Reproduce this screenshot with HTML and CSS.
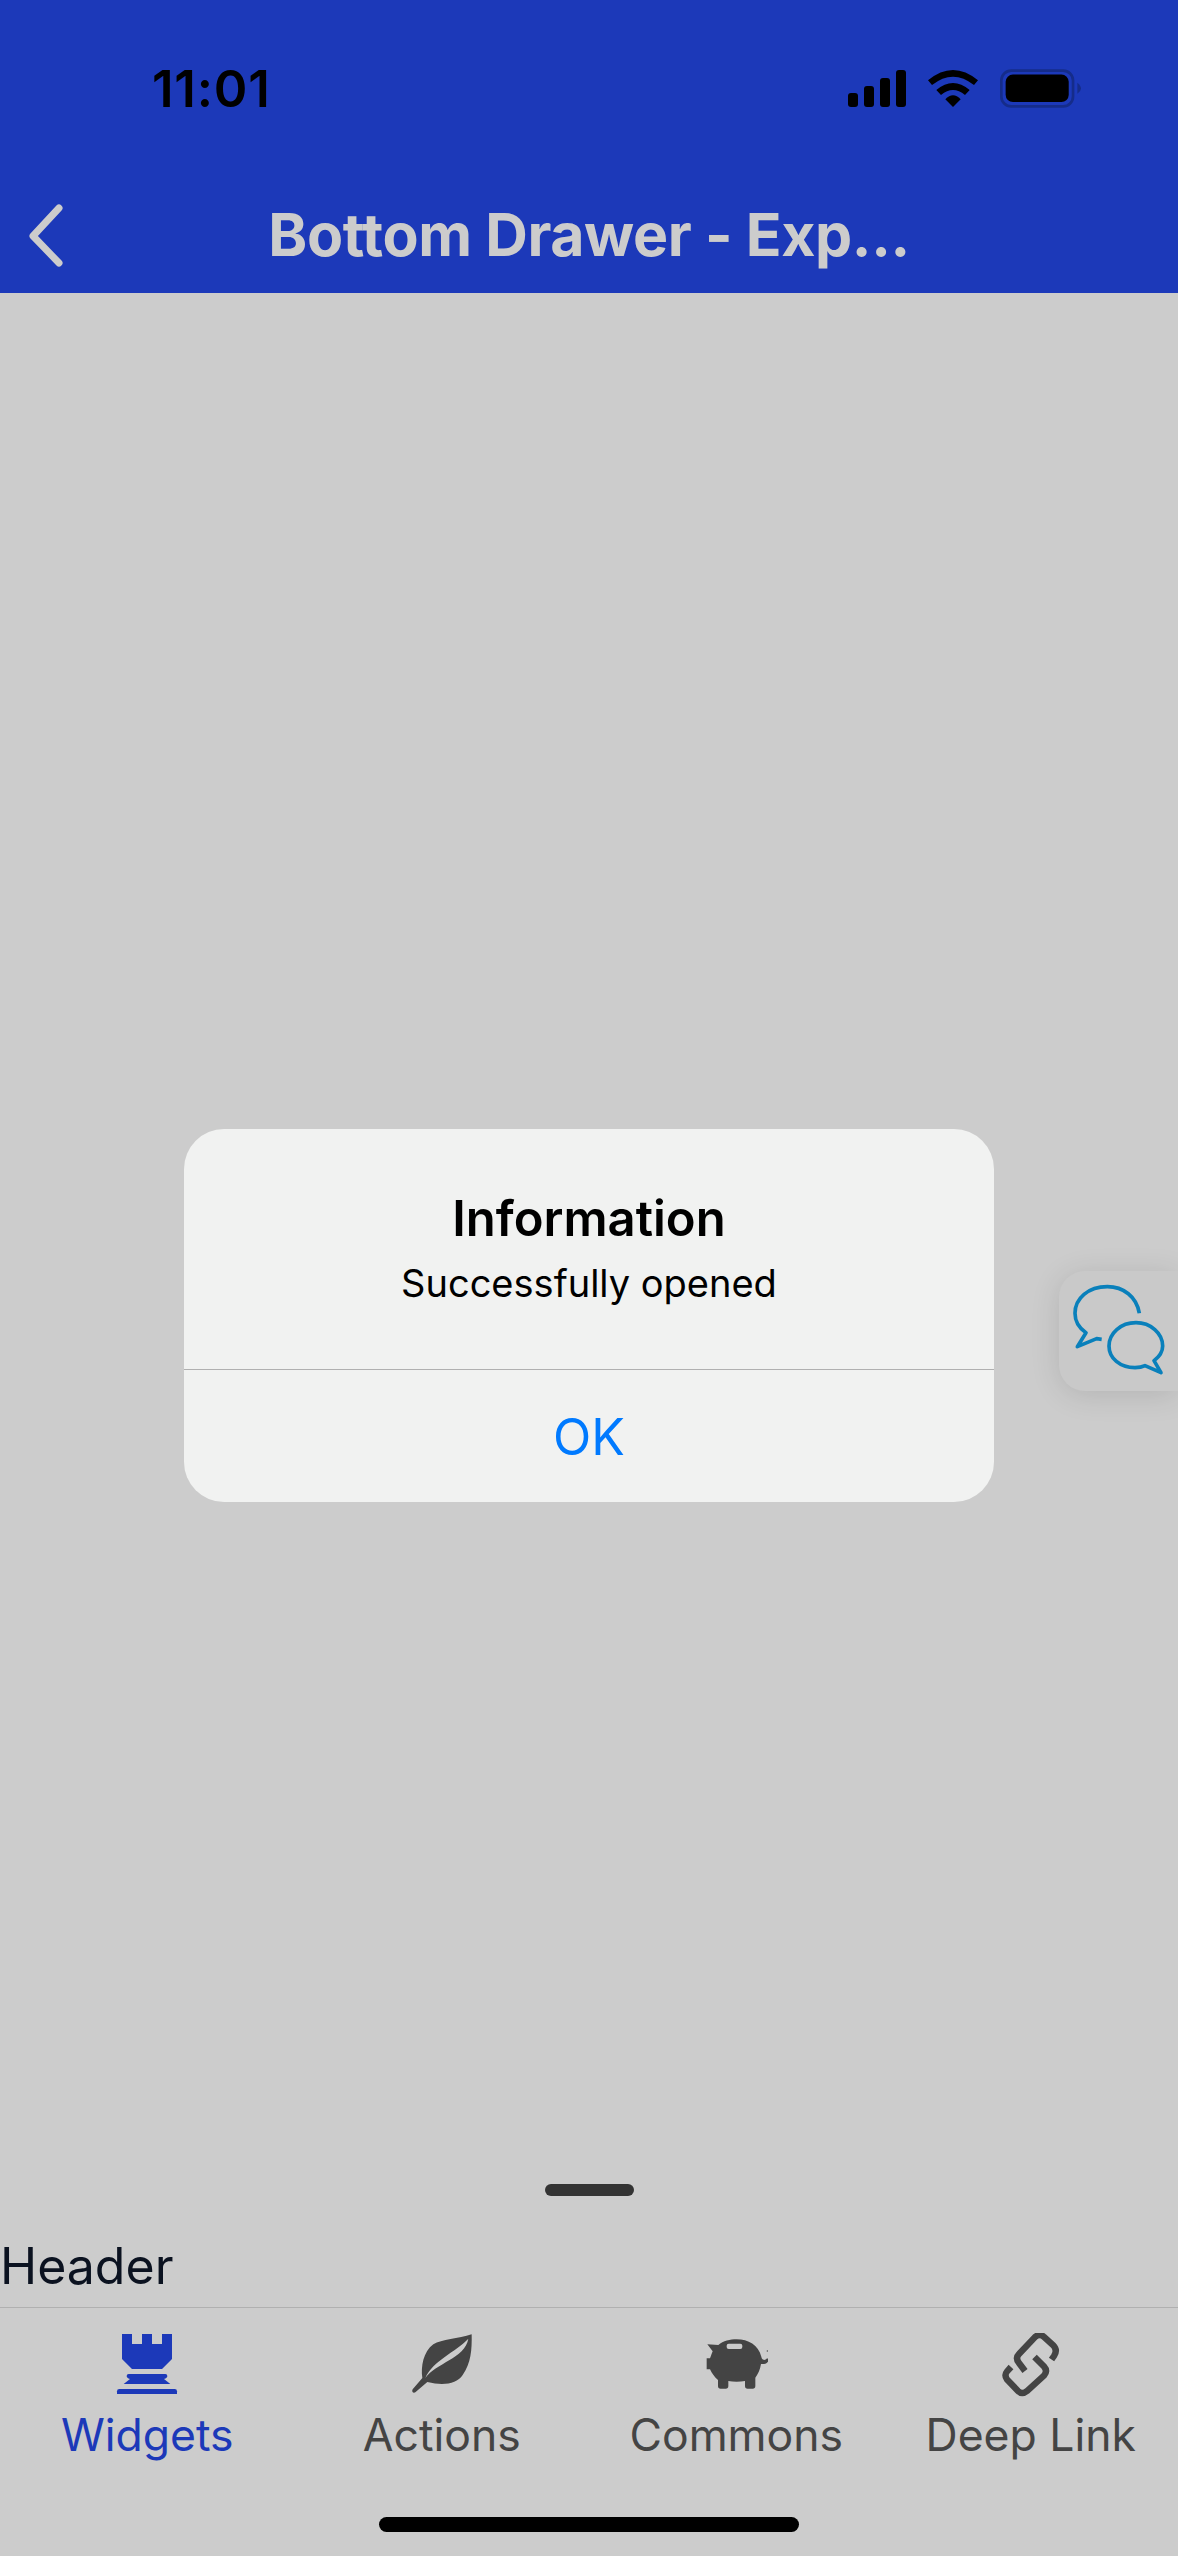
FILE: index.html
```html
<!DOCTYPE html>
<html lang="en">
<head>
<meta charset="utf-8">
<title>Bottom Drawer</title>
<link rel="stylesheet" href="styles.css">
</head>
<body>
<div class="app">
  <header class="top">
    <div class="status">
      <span class="time">11:01</span>
      <div class="status-icons">
        <svg class="ic-signal" viewBox="78 57 174 111"><rect x="78" y="126" width="30" height="42" rx="9"/><rect x="126" y="105" width="30" height="63" rx="9"/><rect x="174" y="81" width="30" height="87" rx="9"/><rect x="222" y="57" width="30" height="111" rx="9"/></svg>
        <svg class="ic-wifi" viewBox="320 57 150 111"><path d="M320 88Q395 26 470 88L458 102Q395 52 332 102Z"/><path d="M345 117Q395 75 445 117L431 132Q395 102 359 132Z"/><path d="M372 145Q395 120 418 145L395 168Z"/></svg>
        <svg class="ic-battery" viewBox="538 54 244 116"><rect class="batt-frame" x="542" y="58" width="216" height="108" rx="30"/><rect x="555" y="70" width="190" height="83" rx="22"/><path class="batt-nub" d="M771 95Q782 105 782 112Q782 120 771 128Z"/></svg>
      </div>
    </div>
    <div class="nav">
      <svg class="back" viewBox="0 0 40 68"><path d="M31 5L5 33L31 60"/></svg>
      <h1 class="title">Bottom Drawer - Exp...</h1>
    </div>
  </header>

  <main class="content"></main>

  <section class="drawer">
    <div class="handle"></div>
    <div class="drawer-header">Header</div>
  </section>

  <nav class="tabs">
    <div class="tab active">
      <svg class="tab-icon" viewBox="75 69 192 192"><path d="M96 72H126V102H156V72H186V102H216V72H246V147L216 177H126L96 147Z"/><path d="M116 192H226Q232 192 232 198Q232 204 222 207L241 222H101L120 207Q110 204 110 198Q110 192 116 192Z"/><path d="M88 237H254Q261 237 261 244V252H81V244Q81 237 88 237Z"/></svg>
      <span class="tab-label">Widgets</span>
    </div>
    <div class="tab">
      <svg class="tab-icon" viewBox="60 69 192 192"><path fill-rule="evenodd" d="M245 73C246 120 243 160 218 195C200 222 160 228 112 216L76 247C70 251 64 245 68 238L97 204C92 170 100 125 130 103C155 88 205 86 245 73ZM235 86C195 128 130 150 106 204C135 160 225 145 235 86Z"/></svg>
      <span class="tab-label">Actions</span>
    </div>
    <div class="tab">
      <svg class="tab-icon" viewBox="942 69 192 192"><path fill-rule="evenodd" d="M952 103L985 105C1000 92 1020 88 1040 88C1075 88 1105 105 1114 140C1116 152 1126 152 1131 145L1134 146V155C1128 162 1120 163 1113 162C1110 180 1104 192 1096 203V228Q1096 236 1088 236H1073Q1065 236 1065 228V213C1050 216 1030 216 1015 213V228Q1015 236 1007 236H992Q984 236 984 228V210C972 200 966 190 960 178H950V145H960C964 135 966 128 968 124ZM1016 101Q1010 101 1010 107V111Q1010 117 1016 117H1051Q1057 117 1057 111V107Q1057 101 1051 101Z"/><circle cx="1132" cy="123" r="2"/></svg>
      <span class="tab-label">Commons</span>
    </div>
    <div class="tab">
      <svg class="tab-icon tab-icon-link" viewBox="9 8 64 64"><path d="M61.5 34.5L64 31Q68 25 63 20L54 12Q50 8 45 12L29 29Q25 33 29 38L35 46"/><path d="M44.5 32L54 41.5Q58 46 54 50.5L37 66Q32 70 28 66L17 54.5Q14 50 17 46.5L21 42"/></svg>
      <span class="tab-label">Deep Link</span>
    </div>
  </nav>

  <div class="home-bar"><span class="home-indicator"></span></div>

  <aside class="chat">
    <svg class="chat-icon" viewBox="87 63 357 360"><path d="M328 190C320 140 280 110 232 110C175 110 135 145 135 190C135 215 148 235 168 248L142 290L200 266L215 268"/><path d="M345 347C335 352 325 353 315 353C270 353 237 325 237 288C237 250 272 218 318 218C362 218 398 250 398 288C398 305 388 320 372 332L393 368Z"/></svg>
  </aside>

  <div class="overlay">
    <div class="dialog">
      <div class="dialog-body">
        <h2 class="dialog-title">Information</h2>
        <p class="dialog-text">Successfully opened</p>
      </div>
      <div class="dialog-action">OK</div>
    </div>
  </div>
</div>
</body>
</html>
```
FILE: styles.css
```css
* { box-sizing: border-box; }
html, body { margin: 0; padding: 0; }
body { font-family: Inter, "Liberation Sans", sans-serif; background: #cccccc; }

.app {
  position: relative;
  width: 1178px;
  height: 2556px;
  display: flex;
  flex-direction: column;
  overflow: hidden;
  background: #cccccc;
}

.top { height: 293px; background: #1c39b9; flex: none; }
.status {
  height: 176px;
  padding: 0 97px 0 152px;
  display: flex;
  align-items: center;
  justify-content: space-between;
}
.time { font-size: 51px; font-weight: 600; letter-spacing: 0.8px; color: #000; line-height: 1; }
.status-icons { display: flex; align-items: center; gap: 22px; }
.status-icons svg { display: block; fill: #000; }
.ic-signal { width: 58px; height: 37px; }
.ic-wifi { width: 50px; height: 37px; }
.ic-battery { width: 81px; height: 39px; }
.batt-frame { fill: none; stroke: #152c8a; stroke-width: 8; }
.batt-nub { fill: #152c8a; }

.nav {
  position: relative;
  height: 117px;
  display: flex;
  align-items: center;
  justify-content: center;
}
.back {
  position: absolute;
  left: 28px;
  top: 27px;
  width: 40px;
  height: 68px;
  fill: none;
  stroke: #cccccc;
  stroke-width: 7;
  stroke-linecap: round;
  stroke-linejoin: round;
}
.title { margin: 0; font-size: 59px; font-weight: 700; letter-spacing: -0.4px; color: #cccccc; line-height: 1; }

.content { flex: 1; }

.drawer { flex: none; height: 123px; }
.handle { width: 89px; height: 12px; border-radius: 6px; background: #333333; margin: 0 auto; }
.drawer-header { margin-top: 40px; font-size: 50px; line-height: 60px; color: #0b1220; }

.tabs {
  flex: none;
  height: 249px;
  border-top: 1px solid #b0b0b0;
  padding-top: 25px;
  display: grid;
  grid-template-columns: repeat(4, 1fr);
}
.tab { display: flex; flex-direction: column; align-items: center; color: #444444; }
.tab.active { color: #1c39b9; }
.tab-icon { width: 64px; height: 64px; display: block; fill: currentColor; }
.tab-icon-link { fill: none; stroke: currentColor; stroke-width: 6.4; }
.tab-label { margin-top: 11px; font-size: 44.5px; line-height: 54px; white-space: nowrap; }

.home-bar { position: absolute; left: 0; right: 0; bottom: 24px; display: flex; justify-content: center; }
.home-indicator { width: 420px; height: 15px; border-radius: 8px; background: #000; }

.chat {
  position: absolute;
  right: 0;
  top: 1271px;
  width: 119px;
  height: 120px;
  background: #c9c9c9;
  border-radius: 26px 0 0 26px;
  box-shadow: 0 4px 30px rgba(0, 0, 0, 0.12);
}
.chat-icon {
  display: block;
  width: 119px;
  height: 120px;
  fill: none;
  stroke: #0a80bb;
  stroke-width: 11;
  stroke-linejoin: round;
}

.overlay {
  position: absolute;
  inset: 0;
  padding-top: 1129px;
  display: flex;
  justify-content: center;
  align-items: flex-start;
}
.dialog { width: 810px; height: 373px; border-radius: 40px; background: #f1f2f1; overflow: hidden; text-align: center; }
.dialog-body { height: 241px; border-bottom: 1px solid #b0b0b0; padding-top: 61px; }
.dialog-title { margin: 0; font-size: 49px; font-weight: 600; line-height: 58px; color: #000; }
.dialog-text { margin: 12px 0 0; font-size: 38px; line-height: 46px; color: #000; }
.dialog-action { height: 132px; display: flex; align-items: center; justify-content: center; font-size: 50px; color: #007aff; padding-top: 2px; }
```
